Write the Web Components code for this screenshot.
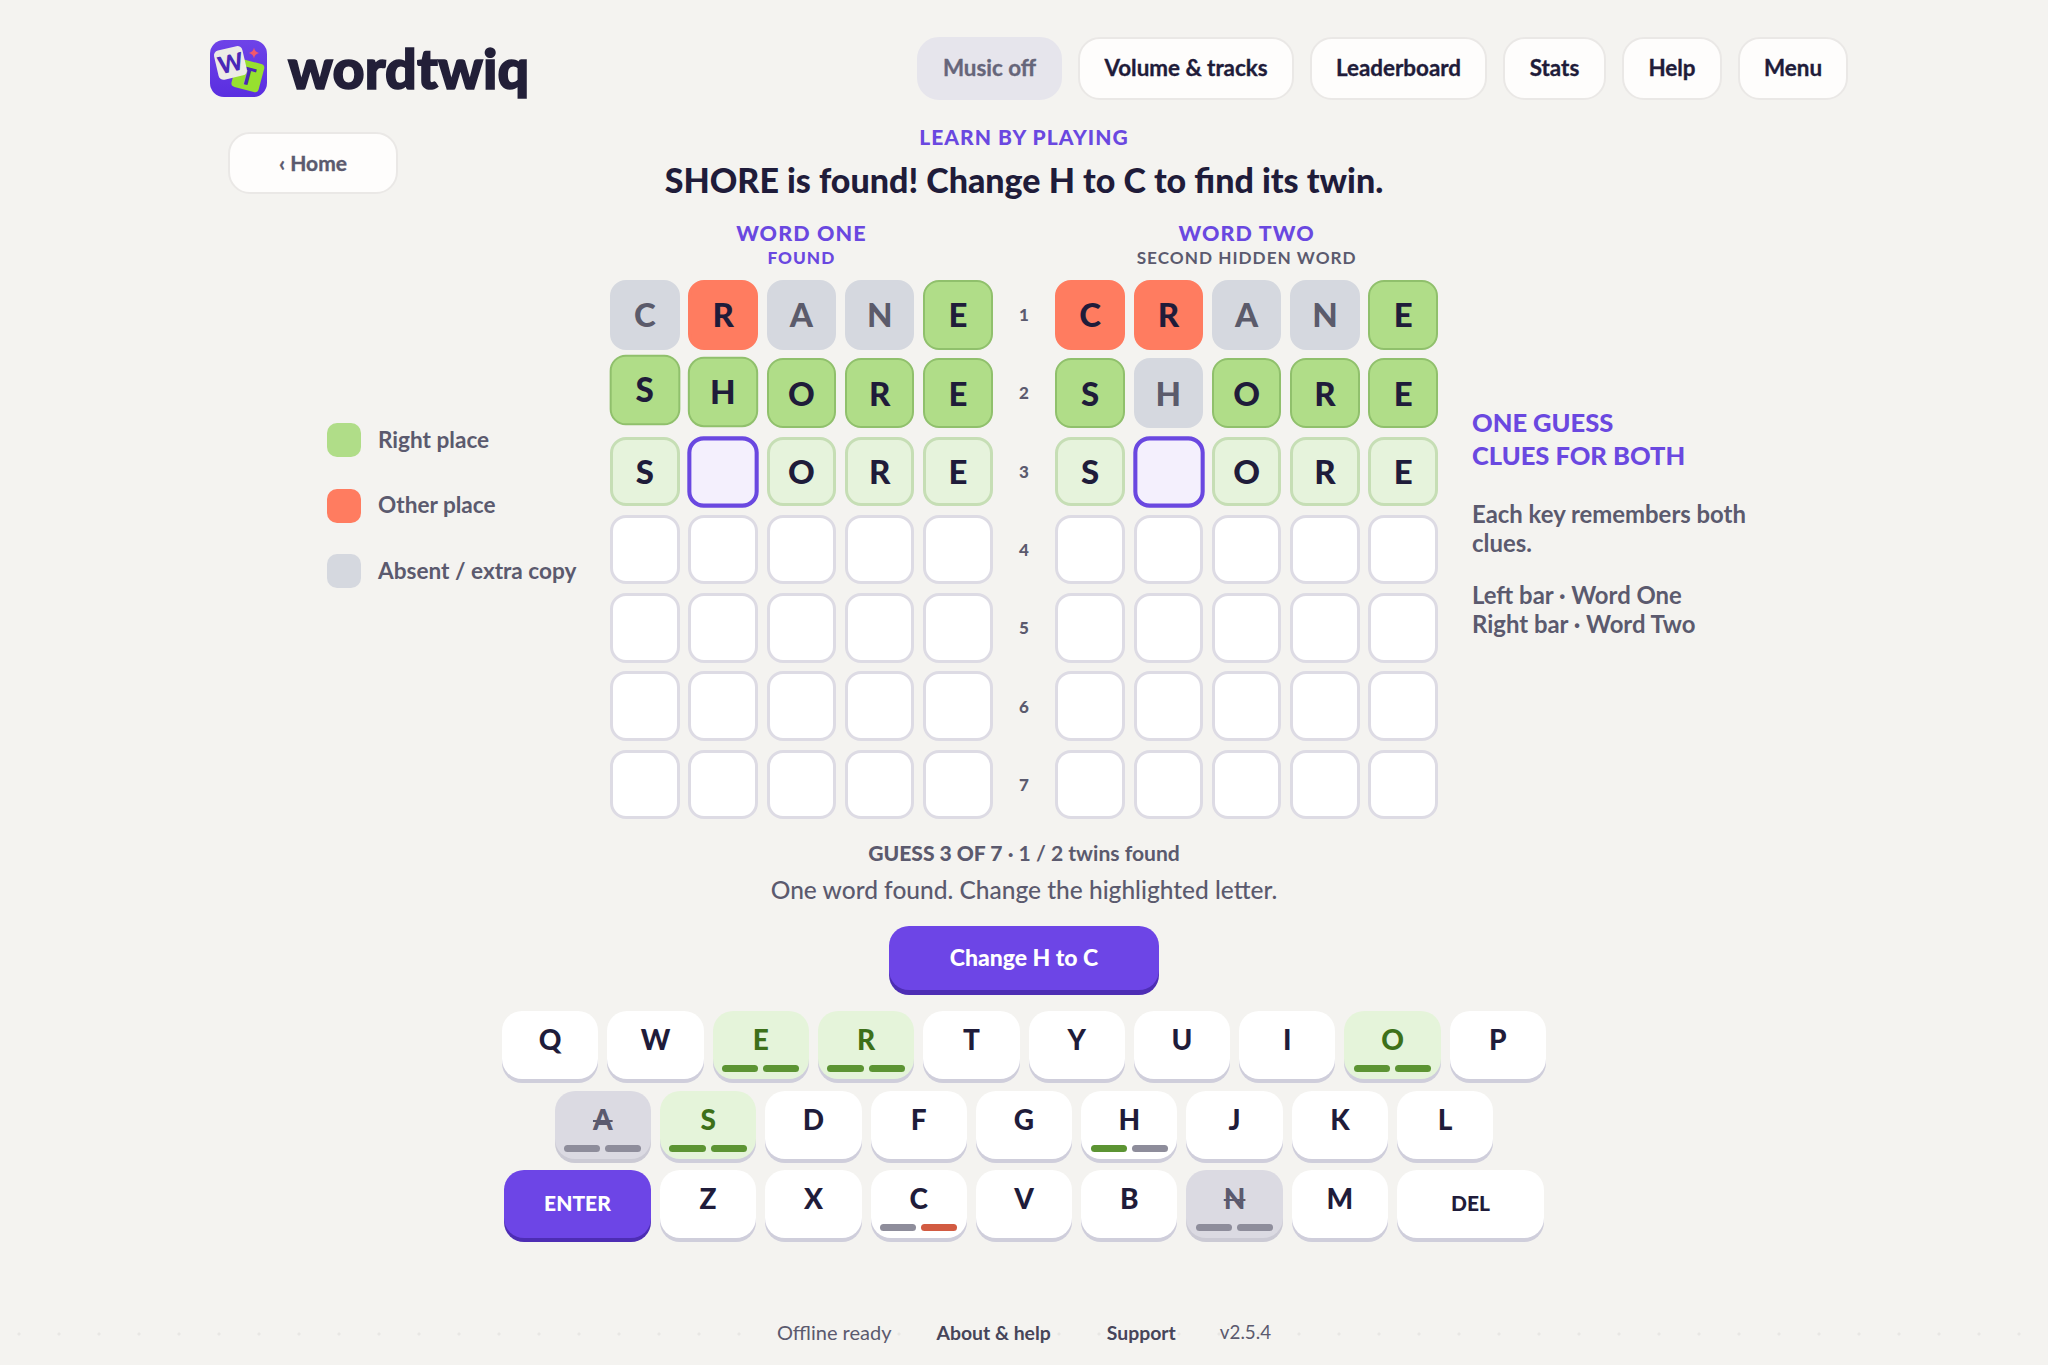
<!DOCTYPE html>
<html lang="en"><head><meta charset="utf-8"><title>wordtwiq</title>
<style>
html,body{margin:0;padding:0;background:#f4f3f0}
body{font-family:"Lato","Noto Sans",sans-serif;color:#1f1c3a}
</style></head>
<body>
<wt-app></wt-app>
<script>
function def(name, css, html){
  customElements.define(name, class extends HTMLElement{
    connectedCallback(){
      if(this.shadowRoot) return;
      const s=this.attachShadow({mode:'open'});
      s.innerHTML='<style>'+css+'</style>'+(typeof html==='function'?html(this):html);
    }
  });
}
def('wt-logo',`:host{display:flex;align-items:center;gap:21px}
svg{display:block;width:57px;height:57px;flex:none}
span{font:900 55.5px/1 "Lato",sans-serif;color:#221f38;-webkit-text-stroke:1.6px #221f38;paint-order:stroke;letter-spacing:.1px}`,
`<svg viewBox="0 0 57 57" aria-hidden="true"><defs><linearGradient id="g" x1="0" y1="0" x2="0" y2="1"><stop offset="0" stop-color="#6e43e8"/><stop offset="1" stop-color="#5a2ee0"/></linearGradient></defs>
<rect width="57" height="57" rx="14" fill="url(#g)"/>
<g transform="rotate(15 38 35)"><rect x="24" y="21" width="28" height="29" rx="4" fill="#97e02f"/><text x="38" y="45" text-anchor="middle" font-family="Lato" font-weight="900" font-size="24" fill="#4a28b8">T</text></g>
<g transform="rotate(-13 20 23)"><rect x="6" y="8" width="29" height="30" rx="5" fill="#ecebe6"/><text x="20.5" y="32" text-anchor="middle" font-family="Lato" font-weight="900" font-size="24" fill="#4a28b8">W</text></g>
<path d="M44 7.5C44.8 11 46 12.3 49.5 13 46 13.8 44.8 15 44 18.5 43.2 15 42 13.8 38.5 13 42 12.3 43.2 11 44 7.5Z" fill="#f2586c"/></svg><span>wordtwiq</span>`);
def('wt-btn',`:host{display:flex;align-items:center;justify-content:center;box-sizing:border-box;height:63px;background:#fefdfc;border:2px solid #eae8e6;border-radius:22px;font:700 22.4px/1 "Lato",sans-serif;-webkit-text-stroke:.35px currentColor;color:#1f1c3a;white-space:nowrap}
:host([off]){background:#e6e5ec;border-color:#e6e5ec;color:#66667a}
:host([home]){height:62px;color:#5b5a6e;font-size:21px;padding-bottom:2px}`,`<slot></slot>`);
def('wt-header',`:host{display:flex;justify-content:space-between;align-items:center;box-sizing:border-box;padding:37px 200px 0 210px;height:99px}
nav{display:flex;gap:16px}`,
`<wt-logo></wt-logo><nav><slot></slot></nav>`);
def('wt-legend-item',`:host{display:flex;align-items:center;gap:17px;height:34px;font:700 22.6px/1 "Lato",sans-serif;color:#5b5a6e;white-space:nowrap}
i{display:block;width:34px;height:34px;border-radius:10px;background:var(--c)}`,`<i></i><slot></slot>`);
def('wt-tile',`:host{display:flex;align-items:center;justify-content:center;box-sizing:border-box;aspect-ratio:1;border-radius:16px;font:900 33px/1 "Lato",sans-serif;color:#1f1c3a;background:#fff;border:3px solid #dddbe4}
:host([s=a]){background:#d5d8df;border-color:#d5d8df;color:#5b5b6b}
:host([s=o]){background:#ff7c60;border-color:#ff7c60}
:host([s=r]){background:#b0dd88;border:2px solid #90c06c}
:host([s=l]){background:#e6f3dc;border-color:#c6deb5}
:host([s=c]){background:#f4f0fd;border:4px solid #6a48e0;transform:scale(1.02)}
:host([up="1"]){transform:translateY(-3px) scale(1.01)}
:host([up="2"]){transform:translateY(-1px) scale(1.005)}`,`<slot></slot>`);
def('wt-board',`:host{display:block;width:382.7px}
header{text-align:center;height:64px;box-sizing:border-box;padding-top:4px}
b{display:block;font:900 21.5px/26px "Lato",sans-serif;color:#6a48e0;letter-spacing:1.1px}
small{display:block;font:700 17.2px/20px "Lato",sans-serif;letter-spacing:1px;color:#5b5a6e;margin-top:1.5px}
:host([found]) small{color:#6a48e0;font-weight:900}
section{display:grid;grid-template-columns:repeat(5,1fr);gap:8.7px}`,
h=>{const rows=JSON.parse(h.getAttribute('rows'));let t='';
 for(let r=0;r<7;r++){for(let c=0;c<5;c++){const v=rows[r]?rows[r][c]:null;
  if(v){const up=(r==1&&h.hasAttribute('found')&&c<2)?` up="${c+1}"`:'';t+=`<wt-tile s="${v[1]}"${up}>${v[0]==' '?'':v[0]}</wt-tile>`}else t+='<wt-tile></wt-tile>'}}
 return `<header><b>${h.getAttribute('title')}</b><small>${h.getAttribute('sub')}</small></header><section>${t}</section>`});
def('wt-rownums',`:host{display:grid;grid-template-rows:repeat(7,69.7px);gap:8.65px;width:62.6px;padding-top:64px;text-align:center;font:900 17px/69.7px "Lato",sans-serif;color:#5b5a6e}`,
`<span>1</span><span>2</span><span>3</span><span>4</span><span>5</span><span>6</span><span>7</span>`);
def('wt-key',`:host{display:flex;flex-direction:column;align-items:center;position:relative;box-sizing:border-box;flex:0 0 96.3px;height:68px;border-radius:20px;background:#fff;box-shadow:0 4px 0 #cfcedb;font:900 28px/1 "Lato",sans-serif;color:#1f1c3a;padding-top:14px}
:host([s=r]){background:#e5f4da;color:#3d7019}
:host([s=a]){background:#dbdae2;color:#5b5a6e;box-shadow:0 4px 0 #cbcad4;text-decoration:line-through;text-decoration-thickness:2px}
:host([wide]){flex-basis:147px;font-size:21px;padding-top:0;padding-bottom:3px;justify-content:center}
:host([enter]){background:#6d45e6;color:#fff;box-shadow:0 4px 0 #4d2db4}
.p{position:absolute;left:9.5px;right:9.5px;bottom:7px;display:flex;gap:5px}
.p i{flex:1;height:7px;border-radius:4px;background:var(--x)}
.g{--x:#5c9433}.n{--x:#8e8d9b}.o{--x:#d25b42}`,
h=>{const p=h.getAttribute('p');return `<slot></slot>`+(p?`<div class="p"><i class="${p[0]}"></i><i class="${p[1]}"></i></div>`:'')});
def('wt-kbrow',`:host{display:flex;justify-content:center;gap:9px}`,`<slot></slot>`);
def('wt-keyboard',`:host{display:flex;flex-direction:column;gap:11.7px;padding-top:17px}`,`<slot></slot>`);
def('wt-side',`:host{display:block;width:320px;padding:0 0 0 34px;color:#5b5a6e;font:700 23.9px/29px "Lato",sans-serif}
h3{margin:0 0 27px;font:900 25.5px/33px "Lato",sans-serif;color:#6a48e0}
p{margin:0 0 23px}`,`<h3><slot name="h"></slot></h3><p><slot name="a"></slot></p><p><slot name="b"></slot></p>`);
def('wt-footer',`:host{display:flex;justify-content:center;align-items:center;box-sizing:border-box;height:60px;margin-top:64px;font:400 20px/1 "Lato",sans-serif;color:#5b5a6e;white-space:nowrap;
 background:radial-gradient(circle,#e8e7e4 1.3px,transparent 1.8px) -1px 29.6px/40px 4px repeat-x}
span{display:block}b{color:#474559;font-weight:700;display:block;font-size:19.4px}`,
`<span style="margin-left:0">Offline ready</span><b style="margin-left:45px">About &amp; help</b><b style="margin-left:56px">Support</b><span style="margin-left:44px;font-size:18.8px">v2.5.4</span>`);
def('wt-app',`:host{display:block;width:2048px;height:1365px;overflow:hidden}
main{display:grid;grid-template-columns:610px 828px 1fr;height:895px}
.left{display:flex;flex-direction:column;align-items:flex-start;padding:33px 0 0 228px}
.left wt-btn{width:170px}
.legend{display:flex;flex-direction:column;gap:31.6px;margin:229px 0 0 99px}
.mid{display:flex;flex-direction:column;align-items:center;padding-top:23px}
.eyebrow{font:900 21px/30px "Lato",sans-serif;letter-spacing:1.05px;color:#6a48e0}
h1{margin:8px 0 0;font:900 34px/40px "Lato",sans-serif;color:#1f1c3a;white-space:nowrap}
.boards{display:flex;margin-top:16px}
.st{margin-top:19px;font:700 21.1px/28px "Lato",sans-serif;color:#5b5a6e;white-space:nowrap}
.st b{font-weight:900}
.ms{margin-top:8px;font:500 24.5px/30px "Lato",sans-serif;color:#5b5a6e;white-space:nowrap}
.cta{margin-top:21px;display:flex;align-items:center;justify-content:center;width:270px;height:64px;border-radius:20px;background:#6d45e6;box-shadow:0 5px 0 #4d2db4;color:#fff;font:900 23px/1 "Lato",sans-serif}
.right{padding-top:307px}`,
`<wt-header>
<wt-btn off style="width:145px">Music off</wt-btn><wt-btn style="width:216px">Volume &amp; tracks</wt-btn><wt-btn style="width:177px">Leaderboard</wt-btn><wt-btn style="width:103px">Stats</wt-btn><wt-btn style="width:100px">Help</wt-btn><wt-btn style="width:110px">Menu</wt-btn>
</wt-header>
<main>
<div class="left"><wt-btn home>‹ Home</wt-btn>
<div class="legend"><wt-legend-item style="--c:#b0dd88">Right place</wt-legend-item><wt-legend-item style="--c:#ff7c60">Other place</wt-legend-item><wt-legend-item style="--c:#d5d8df">Absent / extra copy</wt-legend-item></div></div>
<div class="mid">
<div class="eyebrow">LEARN BY PLAYING</div>
<h1>SHORE is found! Change H to C to find its twin.</h1>
<div class="boards">
<wt-board found title="WORD ONE" sub="FOUND" rows='[["Ca","Ro","Aa","Na","Er"],["Sr","Hr","Or","Rr","Er"],["Sl"," c","Ol","Rl","El"]]'></wt-board>
<wt-rownums></wt-rownums>
<wt-board title="WORD TWO" sub="SECOND HIDDEN WORD" rows='[["Co","Ro","Aa","Na","Er"],["Sr","Ha","Or","Rr","Er"],["Sl"," c","Ol","Rl","El"]]'></wt-board>
</div>
<div class="st"><b>GUESS 3 OF 7</b> · 1 / 2 twins found</div>
<div class="ms">One word found. Change the highlighted letter.</div>
<div class="cta">Change H to C</div>
</div>
<div class="right"><wt-side><span slot="h">ONE GUESS<br>CLUES FOR BOTH</span><span slot="a">Each key remembers both clues.</span><span slot="b">Left bar · Word One<br>Right bar · Word Two</span></wt-side></div>
</main>
<wt-keyboard>
<wt-kbrow><wt-key>Q</wt-key><wt-key>W</wt-key><wt-key s="r" p="gg">E</wt-key><wt-key s="r" p="gg">R</wt-key><wt-key>T</wt-key><wt-key>Y</wt-key><wt-key>U</wt-key><wt-key>I</wt-key><wt-key s="r" p="gg">O</wt-key><wt-key>P</wt-key></wt-kbrow>
<wt-kbrow><wt-key s="a" p="nn">A</wt-key><wt-key s="r" p="gg">S</wt-key><wt-key>D</wt-key><wt-key>F</wt-key><wt-key>G</wt-key><wt-key p="gn">H</wt-key><wt-key>J</wt-key><wt-key>K</wt-key><wt-key>L</wt-key></wt-kbrow>
<wt-kbrow><wt-key wide enter>ENTER</wt-key><wt-key>Z</wt-key><wt-key>X</wt-key><wt-key p="no">C</wt-key><wt-key>V</wt-key><wt-key>B</wt-key><wt-key s="a" p="nn">N</wt-key><wt-key>M</wt-key><wt-key wide>DEL</wt-key></wt-kbrow>
</wt-keyboard>
<wt-footer></wt-footer>`);
</script>
</body></html>
